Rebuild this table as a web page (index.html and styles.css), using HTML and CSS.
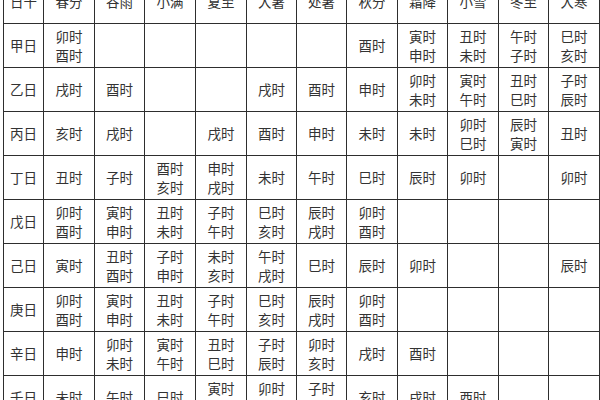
FILE: index.html
```html
<!DOCTYPE html>
<html lang="zh">
<head>
<meta charset="utf-8">
<link rel="stylesheet" href="styles.css">
</head>
<body>
<table class="grid">
<colgroup>
<col class="c0"><col class="w51"><col class="w50"><col class="w51"><col class="w51"><col class="w50"><col class="w50"><col class="w51"><col class="w50"><col class="w51"><col class="w50"><col class="w51">
</colgroup>
<thead>
<tr class="head"><th>日干</th><th>春分</th><th>谷雨</th><th>小满</th><th>夏至</th><th>大暑</th><th>处暑</th><th>秋分</th><th>霜降</th><th>小雪</th><th>冬至</th><th>大寒</th></tr>
</thead>
<tbody>
<tr><th>甲日</th><td>卯时<br>酉时</td><td></td><td></td><td></td><td></td><td></td><td>酉时</td><td>寅时<br>申时</td><td>丑时<br>未时</td><td>午时<br>子时</td><td>巳时<br>亥时</td></tr>
<tr><th>乙日</th><td>戌时</td><td>酉时</td><td></td><td></td><td>戌时</td><td>酉时</td><td>申时</td><td>卯时<br>未时</td><td>寅时<br>午时</td><td>丑时<br>巳时</td><td>子时<br>辰时</td></tr>
<tr><th>丙日</th><td>亥时</td><td>戌时</td><td></td><td>戌时</td><td>酉时</td><td>申时</td><td>未时</td><td>未时</td><td>卯时<br>巳时</td><td>辰时<br>寅时</td><td>丑时</td></tr>
<tr><th>丁日</th><td>丑时</td><td>子时</td><td>酉时<br>亥时</td><td>申时<br>戌时</td><td>未时</td><td>午时</td><td>巳时</td><td>辰时</td><td>卯时</td><td></td><td>卯时</td></tr>
<tr><th>戊日</th><td>卯时<br>酉时</td><td>寅时<br>申时</td><td>丑时<br>未时</td><td>子时<br>午时</td><td>巳时<br>亥时</td><td>辰时<br>戌时</td><td>卯时<br>酉时</td><td></td><td></td><td></td><td></td></tr>
<tr><th>己日</th><td>寅时</td><td>丑时<br>酉时</td><td>子时<br>申时</td><td>未时<br>亥时</td><td>午时<br>戌时</td><td>巳时</td><td>辰时</td><td>卯时</td><td></td><td></td><td>辰时</td></tr>
<tr><th>庚日</th><td>卯时<br>酉时</td><td>寅时<br>申时</td><td>丑时<br>未时</td><td>子时<br>午时</td><td>巳时<br>亥时</td><td>辰时<br>戌时</td><td>卯时<br>酉时</td><td></td><td></td><td></td><td></td></tr>
<tr><th>辛日</th><td>申时</td><td>卯时<br>未时</td><td>寅时<br>午时</td><td>丑时<br>巳时</td><td>子时<br>辰时</td><td>卯时<br>亥时</td><td>戌时</td><td>酉时</td><td></td><td></td><td></td></tr>
<tr><th>壬日</th><td>未时</td><td>午时</td><td>巳时</td><td>寅时<br>辰时</td><td>卯时<br>巳时</td><td>子时<br>寅时</td><td>亥时</td><td>戌时</td><td>酉时</td><td></td><td></td></tr>
</tbody>
</table>
</body>
</html>
```
FILE: styles.css
```css
html, body {
  margin: 0;
  padding: 0;
  background: #fff;
  overflow: hidden;
}
body {
  width: 600px;
  height: 400px;
}
.grid {
  margin: -22px 0 0 3px;
  width: 596px;
  table-layout: fixed;
  border-collapse: collapse;
  font-family: "Noto Sans CJK SC", "Noto Sans", sans-serif;
  font-size: 13.5px;
  line-height: 19px;
  color: #333;
}
.c0 { width: 40px; }
.w51 { width: 51px; }
.w50 { width: 50px; }
.grid th,
.grid td {
  border: 1px solid #2e2e2e;
  padding: 0;
  height: 43px;
  text-align: center;
  vertical-align: middle;
  font-weight: normal;
}
.grid .head th {
  height: 44px;
}
```
